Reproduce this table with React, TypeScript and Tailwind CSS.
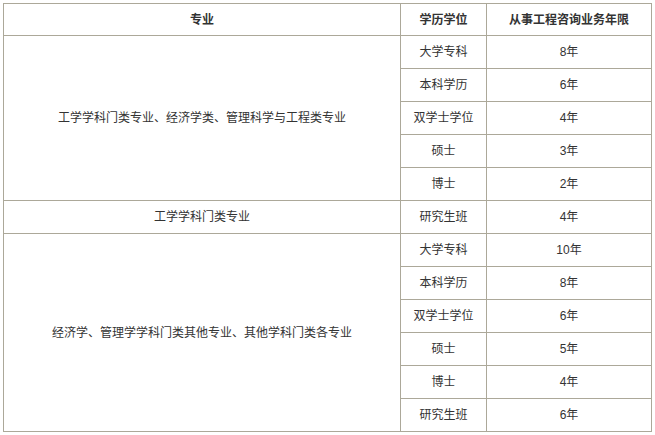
const groups = [
  {
    major: '工学学科门类专业、经济学类、管理科学与工程类专业',
    span: 'row-span-5',
    rows: [
      ['大学专科', '8年'],
      ['本科学历', '6年'],
      ['双学士学位', '4年'],
      ['硕士', '3年'],
      ['博士', '2年'],
    ],
  },
  {
    major: '工学学科门类专业',
    span: 'row-span-1',
    rows: [['研究生班', '4年']],
  },
  {
    major: '经济学、管理学学科门类其他专业、其他学科门类各专业',
    span: 'row-span-6',
    rows: [
      ['大学专科', '10年'],
      ['本科学历', '8年'],
      ['双学士学位', '6年'],
      ['硕士', '5年'],
      ['博士', '4年'],
      ['研究生班', '6年'],
    ],
  },
];

function Cell({ children, className = '' }: { children: React.ReactNode; className?: string }) {
  return <div className={`flex items-center justify-center bg-white ${className}`}>{children}</div>;
}

export default function App() {
  return (
    <div className="w-[655px] h-[435px] bg-white pt-[3px] pl-[3px] text-[12px] leading-none text-[#333] font-['Liberation_Sans','Noto_Sans_CJK_SC',sans-serif]">
      <div className="grid w-[649px] grid-cols-[396px_85px_164px] grid-rows-[31px_repeat(12,32px)] gap-px bg-[#aca899] p-px">
        <Cell className="font-bold">专业</Cell>
        <Cell className="font-bold">学历学位</Cell>
        <Cell className="font-bold">从事工程咨询业务年限</Cell>
        {groups.map((g) => [
          <Cell key={g.major} className={`col-start-1 ${g.span}`}>
            {g.major}
          </Cell>,
          ...g.rows.map(([degree, years], i) => [
            <Cell key={g.major + i + 'd'} className="col-start-2">
              {degree}
            </Cell>,
            <Cell key={g.major + i + 'y'} className="col-start-3">
              {years}
            </Cell>,
          ]),
        ])}
      </div>
    </div>
  );
}
